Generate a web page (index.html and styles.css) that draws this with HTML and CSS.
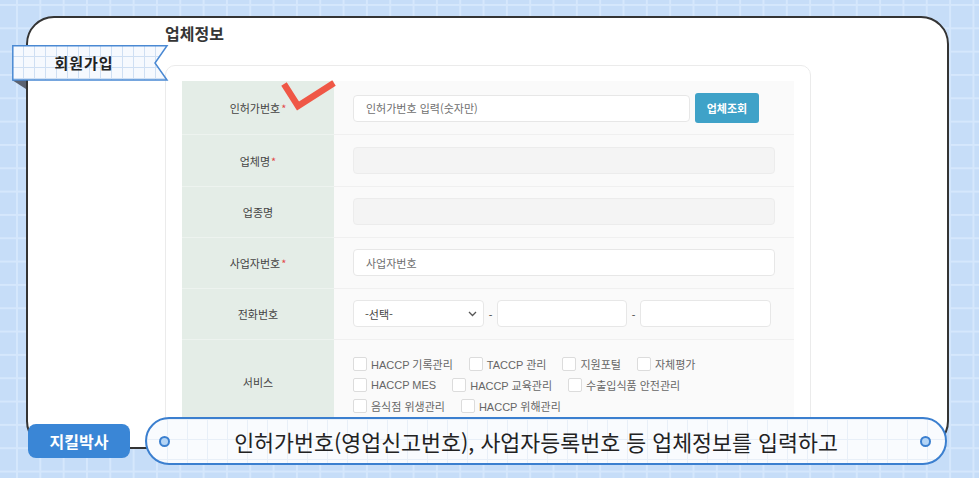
FILE: index.html
```html
<!DOCTYPE html>
<html lang="ko">
<head>
<meta charset="utf-8">
<title>회원가입 - 업체정보</title>
<link rel="stylesheet" href="styles.css">
</head>
<body>
<div class="window">
  <h2 class="title">업체정보</h2>
  <div class="card">
    <div class="table">
      <div class="row r1">
        <div class="label">인허가번호<span class="req">*</span></div>
        <div class="value">
          <input class="field permit" type="text" placeholder="인허가번호 입력(숫자만)">
          <button class="btn" type="button">업체조회</button>
        </div>
      </div>
      <div class="row r2">
        <div class="label">업체명<span class="req">*</span></div>
        <div class="value"><input class="field" type="text" disabled></div>
      </div>
      <div class="row">
        <div class="label">업종명</div>
        <div class="value"><input class="field" type="text" disabled></div>
      </div>
      <div class="row">
        <div class="label">사업자번호<span class="req">*</span></div>
        <div class="value"><input class="field" type="text" placeholder="사업자번호"></div>
      </div>
      <div class="row">
        <div class="label">전화번호</div>
        <div class="value">
          <div class="select">
            <span>-선택-</span>
            <svg class="chev" width="9" height="6" viewBox="0 0 9 6"><path d="M1 1 L4.5 4.5 L8 1" fill="none" stroke="#555" stroke-width="1.3"/></svg>
          </div>
          <span class="dash">-</span>
          <input class="field tel" type="text">
          <span class="dash">-</span>
          <input class="field tel last" type="text">
        </div>
      </div>
      <div class="row svc-row">
        <div class="label">서비스</div>
        <div class="value svc">
          <div class="line">
            <label class="item"><input type="checkbox">HACCP 기록관리</label>
            <label class="item"><input type="checkbox">TACCP 관리</label>
            <label class="item"><input type="checkbox">지원포털</label>
            <label class="item"><input type="checkbox">자체평가</label>
          </div>
          <div class="line">
            <label class="item"><input type="checkbox">HACCP MES</label>
            <label class="item"><input type="checkbox">HACCP 교육관리</label>
            <label class="item"><input type="checkbox">수출입식품 안전관리</label>
          </div>
          <div class="line">
            <label class="item"><input type="checkbox">음식점 위생관리</label>
            <label class="item"><input type="checkbox">HACCP 위해관리</label>
          </div>
        </div>
      </div>
    </div>
  </div>
</div>

<div class="ribbon">
  <svg class="ribbon-bg" width="158" height="46" viewBox="0 0 158 46">
    <defs>
      <pattern id="rg" width="11" height="11" patternUnits="userSpaceOnUse">
        <rect width="11" height="11" fill="#f6f9fe"/>
        <path d="M0 0.5 H11 M0.5 0 V11" stroke="#cfdff3" stroke-width="1"/>
      </pattern>
    </defs>
    <polygon points="0,35 14,35 14,44" fill="#5b6270"/>
    <polygon points="0.8,0.8 155,0.8 143,18 155,35 0.8,35" fill="url(#rg)" stroke="#4a89d3" stroke-width="1.5"/>
  </svg>
  <span class="ribbon-text">회원가입</span>
</div>

<svg class="check" width="62" height="40" viewBox="0 0 62 40">
  <path d="M5 6 L19 28 L55 5" fill="none" stroke="#ef5746" stroke-width="6.5" stroke-linejoin="miter"/>
</svg>

<div class="subtitle">
  <div class="speaker">지킬박사</div>
  <div class="pill">
    <span class="dot"></span>
    <span class="caption">인허가번호(영업신고번호), 사업자등록번호 등 업체정보를 입력하고</span>
    <span class="dot"></span>
  </div>
</div>
</body>
</html>
```

FILE: styles.css
```css
html, body {
  margin: 0;
}
body {
  width: 979px;
  height: 478px;
  box-sizing: border-box;
  padding: 16px 0 0 26px;
  position: relative;
  overflow: hidden;
  background-color: #c6ddf8;
  background-image:
    linear-gradient(#d5e7fc 2px, transparent 2px),
    linear-gradient(90deg, #d5e7fc 2px, transparent 2px);
  background-size: 23.33px 23.33px;
  background-position: 16px 4px;
  font-family: "Liberation Sans", "Noto Sans CJK KR", sans-serif;
}

.window {
  width: 923px;
  height: 433px;
  box-sizing: border-box;
  border: 2px solid #343434;
  border-radius: 28px;
  background: #fff;
  overflow: hidden;
  padding: 5px 0 0 137px;
}

.title {
  margin: 0;
  font: bold 16px/20px "Noto Sans CJK KR", sans-serif;
  color: #353535;
}

.card {
  margin-top: 22px;
  width: 646px;
  box-sizing: border-box;
  border: 1px solid #ebebeb;
  border-radius: 10px;
  padding: 15px 16px 40px;
}

.row {
  display: grid;
  grid-template-columns: 152px 460px;
}

.label {
  background: #e4ede7;
  border-bottom: 1px solid #edf3ef;
  display: flex;
  align-items: center;
  justify-content: center;
  font: 11px "Noto Sans CJK KR", sans-serif;
  color: #444;
}
.req {
  color: #e24a4a;
  margin-left: 1px;
}

.value {
  background: #fafafa;
  border-bottom: 1px solid #f0f0f0;
  padding: 11px 19px 12px;
  display: flex;
  align-items: center;
}
.r1 .value {
  padding: 12px 19px 11px;
}
.r2 .value {
  padding: 12px 19px 12px;
}

.field {
  width: 422px;
  height: 27px;
  box-sizing: border-box;
  border: 1px solid #e7e7e7;
  border-radius: 4px;
  background: #fff;
  padding: 0 12px;
  margin: 0;
  font: 11px "Noto Sans CJK KR", sans-serif;
  color: #555;
  outline: none;
}
.field::placeholder {
  color: #6f6f6f;
}
.field:disabled {
  background: #f4f4f4;
  border-color: #ececec;
}
.permit {
  width: 337px;
}
.btn {
  margin-left: 5px;
  width: 64px;
  height: 30px;
  border: 0;
  border-radius: 3px;
  background: #3fa2c8;
  color: #fff;
  font: bold 11px "Noto Sans CJK KR", sans-serif;
  padding: 0;
}

.select {
  width: 131px;
  height: 27px;
  box-sizing: border-box;
  border: 1px solid #e7e7e7;
  border-radius: 4px;
  background: #fff;
  padding: 0 6px 0 11px;
  display: flex;
  align-items: center;
  justify-content: space-between;
  font: 11px "Noto Sans CJK KR", sans-serif;
  color: #444;
}
.dash {
  width: 13px;
  text-align: center;
  font-size: 11px;
  color: #555;
}
.tel {
  width: 130px;
}
.tel.last {
  width: 131px;
}

.svc-row .value {
  padding: 13px 19px 8px;
  flex-direction: column;
  align-items: flex-start;
}
.line {
  display: flex;
  align-items: center;
  height: 21px;
}
.item {
  display: flex;
  align-items: center;
  margin-right: 16px;
  font-size: 11px;
  color: #666;
  white-space: nowrap;
}
.item input {
  appearance: none;
  -webkit-appearance: none;
  width: 14px;
  height: 14px;
  margin: 0 4px 0 0;
  border: 1px solid #dcdcdc;
  border-radius: 2px;
  background: #fff;
}

.ribbon {
  position: absolute;
  left: 12px;
  top: 45px;
  width: 156px;
  height: 35px;
  display: flex;
  align-items: center;
  justify-content: center;
}
.ribbon-bg {
  position: absolute;
  left: 0;
  top: 0;
}
.ribbon-text {
  position: relative;
  margin-right: 12px;
  font: bold 15px "Noto Sans CJK KR", sans-serif;
  letter-spacing: 1px;
  color: #222;
}

.check {
  position: absolute;
  left: 279px;
  top: 78px;
}

.subtitle {
  position: absolute;
  left: 28px;
  top: 417px;
  display: flex;
  align-items: center;
}
.speaker {
  width: 102px;
  height: 34px;
  border-radius: 8px;
  background: #3a86d6;
  color: #fff;
  display: flex;
  align-items: center;
  justify-content: center;
  font: bold 16px "Noto Sans CJK KR", sans-serif;
}
.pill {
  margin-left: 15px;
  width: 802px;
  height: 48px;
  box-sizing: border-box;
  border: 2px solid #3b7fcf;
  border-radius: 24px;
  background-color: #f9fbfe;
  background-image:
    linear-gradient(#e8eff8 1px, transparent 1px),
    linear-gradient(90deg, #e8eff8 1px, transparent 1px);
  background-size: 20px 20px;
  display: flex;
  align-items: center;
  padding: 0 14px 0 12px;
}
.dot {
  width: 11px;
  height: 11px;
  box-sizing: border-box;
  border: 2px solid #3b7fcf;
  border-radius: 50%;
  background: #b4d4f5;
  flex: none;
}
.caption {
  flex: 1;
  text-align: center;
  padding-right: 18px;
  font: 21.7px "Noto Sans CJK KR", sans-serif;
  color: #222;
  letter-spacing: 0;
}
```
